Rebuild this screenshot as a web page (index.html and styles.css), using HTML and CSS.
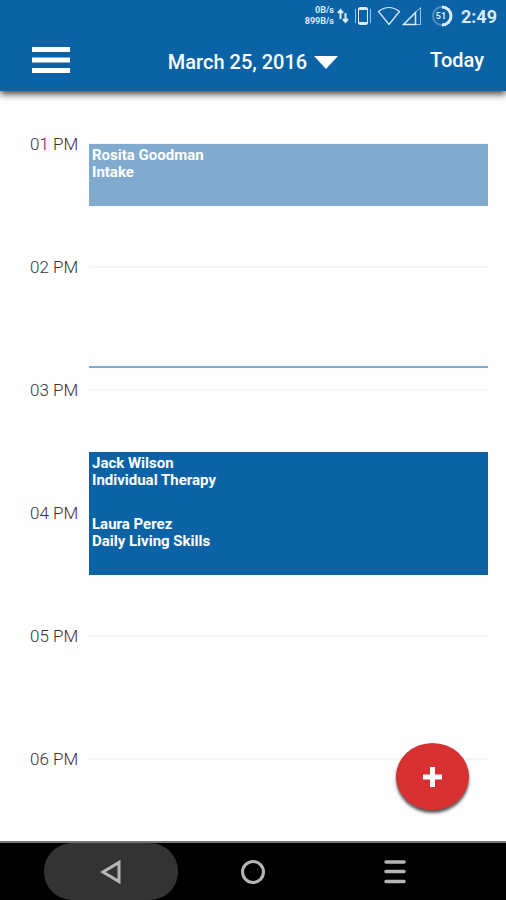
FILE: index.html
```html
<!DOCTYPE html>
<html lang="en">
<head>
<meta charset="utf-8">
<meta name="viewport" content="width=device-width, initial-scale=1">
<title>Schedule</title>
<link rel="stylesheet" href="styles.css">
</head>
<body>
<header class="top">
  <div class="status">
    <div class="speed"><span>0B/s</span><span>899B/s</span></div>
    <svg class="arrows" width="12" height="16" viewBox="0 0 12 16" fill="none" stroke="currentColor" stroke-width="2"><path d="M3.500 11V2M1 5l2.500-3L6 5M8.500 5v9M6 11l2.500 3 2.500-3"/></svg>
    <svg class="vibrate" width="18" height="20" viewBox="0 0 18 20" fill="none" stroke="currentColor"><path d="M1.500 3v14M16.500 3v14" opacity=".7"/><rect x="4.500" y="1.500" width="9" height="17" rx="1"/><path d="M4.500 3h9M4.500 17h9" stroke-width="2"/></svg>
    <svg class="wifi" width="24" height="20" viewBox="0 0 24 20" fill="none" stroke="currentColor" stroke-width="1.200"><path d="M1.500 5.500Q12-2.500 22.500 5.500L12 18.500z"/></svg>
    <svg class="signal" width="20" height="20" viewBox="0 0 20 20" fill="none" stroke="currentColor"><path d="M18.500 1.500v17H1.500z" opacity=".7"/><path d="M13.500 6.500v12H1.500z" stroke-width="1.500"/></svg>
    <svg class="battery" width="22" height="22" viewBox="0 0 22 22" fill="none" stroke="currentColor"><circle cx="11" cy="11" r="9" stroke-width="2" opacity=".35"/><path d="M11 2a9 9 0 0 1 0 18" stroke-width="3"/><text x="10" y="14" class="percent">51</text></svg>
    <time class="clock">2:49</time>
  </div>
  <div class="appbar">
    <button class="menu" aria-label="Menu"><svg width="38" height="26" viewBox="0 0 38 26" fill="currentColor"><path d="M0 0h38v5H0zM0 10.500h38v5H0zM0 21h38v5H0z"/></svg></button>
    <button class="date">March 25, 2016<svg width="24" height="13" viewBox="0 0 24 13" fill="currentColor"><path d="M0 0h24L12 13z"/></svg></button>
    <button class="today">Today</button>
  </div>
</header>
<main class="day">
  <div class="timeline">
    <div class="hour h1"><span>01 PM</span></div>
    <div class="hour h2"><span>02 PM</span></div>
    <div class="hour h3"><span>03 PM</span></div>
    <div class="hour h4"><span>04 PM</span></div>
    <div class="hour h5"><span>05 PM</span></div>
    <div class="hour h6"><span>06 PM</span></div>
    <article class="event past"><p>Rosita Goodman</p><p>Intake</p></article>
    <div class="now"></div>
    <article class="event jack"><p>Jack Wilson</p><p>Individual Therapy</p></article>
    <article class="event laura"><p>Laura Perez</p><p>Daily Living Skills</p></article>
  </div>
  <button class="add" aria-label="Add appointment"><svg width="19" height="20" viewBox="0 0 19 20" fill="none" stroke="currentColor" stroke-width="5"><path d="M9.500 0v20M0 10h19"/></svg></button>
</main>
<nav class="system">
  <button class="back" aria-label="Back"><svg width="22" height="26" viewBox="0 0 22 26" fill="none" stroke="currentColor" stroke-width="3"><path d="M19 3.500v19L3 13z"/></svg></button>
  <button aria-label="Home"><svg width="26" height="26" viewBox="0 0 26 26" fill="none" stroke="currentColor" stroke-width="3"><circle cx="13" cy="13" r="10.500"/></svg></button>
  <button aria-label="Recent apps"><svg width="22" height="26" viewBox="0 0 22 26" fill="none" stroke="currentColor" stroke-width="3.500" stroke-linecap="round"><path d="M2 3h18M2 12.500h18M2 22.500h18"/></svg></button>
</nav>
</body>
</html>
```
FILE: styles.css
```css
* {
  box-sizing: border-box;
}

body {
  margin: 0;
  min-height: 100vh;
  display: flex;
  flex-direction: column;
  background: #fefefe;
  font-family: Roboto, "Liberation Sans", sans-serif;
}

button {
  margin: 0;
  padding: 0;
  border: 0;
  background: none;
  color: inherit;
  font: inherit;
}

svg {
  display: block;
}

p {
  margin: 0;
}

.top {
  background: #0b62a5;
  color: #fff;
  box-shadow: 0 3px 7px rgba(40, 25, 20, 0.85);
  z-index: 1;
}

.status {
  height: 32px;
  display: flex;
  align-items: center;
  justify-content: flex-end;
  padding-right: 9px;
  color: #dcebf9;
}

.speed {
  display: flex;
  flex-direction: column;
  align-items: flex-end;
  font-size: 9px;
  font-weight: 700;
  line-height: 11px;
}

.arrows {
  margin-left: 3px;
}

.vibrate {
  margin-left: 5px;
}

.wifi {
  margin-left: 5px;
}

.signal {
  margin-left: 1px;
}

.battery {
  margin-left: 9px;
}

.percent {
  fill: currentColor;
  stroke: none;
  font-size: 9px;
  font-weight: 700;
  text-anchor: middle;
}

.clock {
  margin-left: 8px;
  font-size: 18px;
  font-weight: 700;
}

.appbar {
  height: 59px;
  display: grid;
  grid-template-columns: 1fr auto 1fr;
  align-items: center;
  padding: 0 22px 3px;
  font-size: 20px;
  font-weight: 500;
}

.menu {
  justify-self: start;
  padding-left: 10px;
}

.date {
  display: flex;
  align-items: center;
  gap: 7px;
  padding-top: 4px;
}

.today {
  justify-self: end;
}

.day {
  flex: 1;
  display: flex;
  position: relative;
  padding: 53px 18px 0 30px;
}

.timeline {
  flex: 1;
  display: grid;
  grid-template-columns: 59px 1fr;
  grid-template-rows: repeat(5, 62px 61px) 62px 1fr;
}

.hour {
  grid-column: 1 / 3;
  display: flex;
  gap: 9px;
  height: 24px;
  margin-top: -12px;
  align-items: center;
  font-size: 17px;
  font-weight: 300;
  line-height: 24px;
  color: #333;
  white-space: nowrap;
}

.hour span {
  width: 50px;
}

.hour::after {
  content: "";
  flex: 1;
  height: 2px;
  background: #f5f5f5;
}

.h1 { grid-row: 1; }
.h2 { grid-row: 3; }
.h3 { grid-row: 5; }
.h4 { grid-row: 7; }
.h5 { grid-row: 9; }
.h6 { grid-row: 11; }

.event {
  grid-column: 2;
  padding: 3px;
  background: #0b62a5;
  color: #fff;
  font-size: 15px;
  font-weight: 700;
  line-height: 17px;
  z-index: 0;
}

.past {
  grid-row: 1;
  background: #80abcf;
}

.jack {
  grid-row: 6;
}

.laura {
  grid-row: 7;
}

.now {
  grid-column: 2;
  grid-row: 4;
  height: 2px;
  margin-top: 37px;
  background: #80abcf;
}

.add {
  position: absolute;
  right: 37px;
  bottom: 31px;
  width: 73px;
  height: 67px;
  display: grid;
  place-items: center;
  border-radius: 50%;
  background: #d73030;
  color: #fff;
  box-shadow: 0 3px 3px rgba(0, 0, 0, 0.65);
}

.system {
  height: 59px;
  display: grid;
  grid-template-columns: repeat(3, 134px);
  justify-content: center;
  column-gap: 8px;
  border-top: 2px solid #777;
  background: #000;
  color: #b5b5b5;
}

.system button {
  display: grid;
  place-items: center;
}

.back {
  border-radius: 28px;
}

.system .back {
  background: #333;
}
```
